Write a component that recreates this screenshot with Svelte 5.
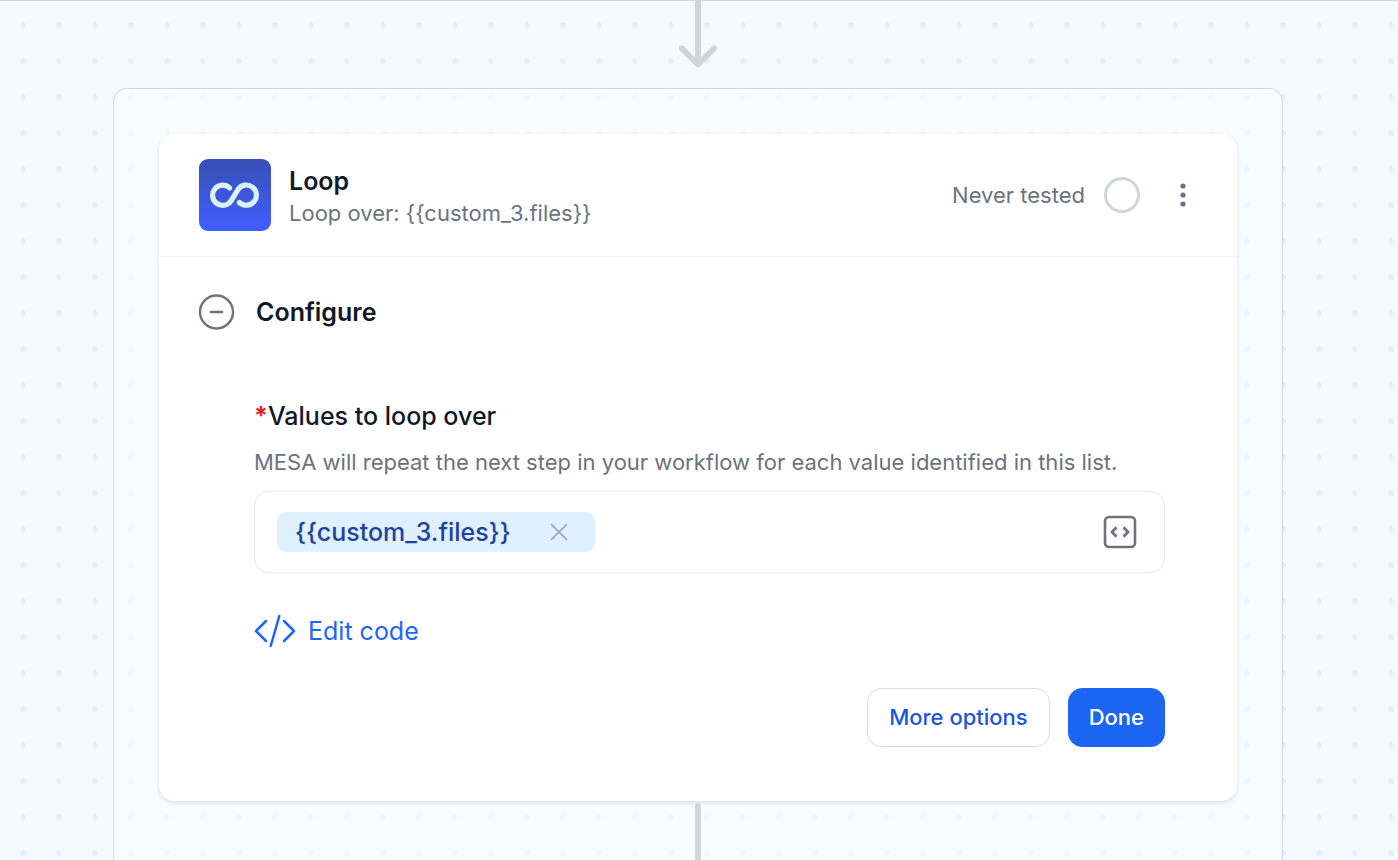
<script>
  let open = $state(true);
  let chips = $state(['{{custom_3.files}}']);
  let draft = $state('');
</script>

<main class="canvas">
  <svg class="arrow" width="40" height="68" viewBox="0 0 40 68" fill="none" aria-hidden="true">
    <path d="M20 -4V62M4 47.500L20 63.500L36 47.500" />
  </svg>

  <section class="group">
    <article class="card">
      <header class="head">
        <svg class="logo" width="72" height="72" viewBox="0 0 72 72" fill="none" aria-hidden="true">
          <defs>
            <linearGradient id="tile" x1="0" y1="0" x2="0" y2="1">
              <stop offset="0" stop-color="#374fb4" />
              <stop offset="1" stop-color="#405eff" />
            </linearGradient>
          </defs>
          <rect width="72" height="72" rx="9" fill="url(#tile)" />
          <path
            d="M30.600 28.900A10.100 10.100 0 1 0 31.800 42.300L39.200 30.100A10.100 10.100 0 1 1 40.400 43.500"
            stroke="#d8f3f3" stroke-width="5.200" stroke-linecap="round" stroke-linejoin="round"
          />
        </svg>
        <div class="titles">
          <h1>Loop</h1>
          <p>Loop over: &#123;&#123;custom_3.files&#125;&#125;</p>
        </div>
        <span class="status">Never tested</span>
        <span class="ring"></span>
        <button class="plain menu" type="button" aria-label="Step menu">
          <svg width="8" height="26" viewBox="0 0 8 26" fill="#6b7280">
            <circle cx="4" cy="4" r="2.600" /><circle cx="4" cy="13" r="2.600" /><circle cx="4" cy="22" r="2.600" />
          </svg>
        </button>
      </header>

      <div class="body">
        <button class="plain section" type="button" aria-expanded={open} onclick={() => (open = !open)}>
          <svg width="36" height="36" viewBox="0 0 36 36" fill="none" stroke="#6b7280" stroke-width="2.400" stroke-linecap="round">
            <circle cx="17.500" cy="18" r="16.500" />
            <path d={open ? 'M12 18H23' : 'M12 18H23M17.500 12.500V23.500'} />
          </svg>
          Configure
        </button>

        {#if open}
          <div class="form">
            <label for="values"><span class="star">*</span>Values to loop over</label>
            <p class="help" id="help">MESA will repeat the next step in your workflow for each value identified in this list.</p>
            <div class="field">
              {#each chips as chip, i}
                <span class="chip">
                  {chip}
                  <button class="plain" type="button" aria-label="Remove value" onclick={() => chips.splice(i, 1)}>
                    <svg width="18" height="18" viewBox="0 0 18 18" fill="none" stroke="#9ca3af" stroke-width="1.700" stroke-linecap="round">
                      <path d="M1.500 1.500L16.500 16.500M16.500 1.500L1.500 16.500" />
                    </svg>
                  </button>
                </span>
              {/each}
              <input id="values" type="text" aria-describedby="help" bind:value={draft} />
              <button class="plain" type="button" aria-label="Insert variable">
                <svg width="34" height="34" viewBox="0 0 34 34" fill="none" stroke="#6b7280" stroke-linecap="round" stroke-linejoin="round">
                  <rect x="2" y="2" width="30" height="30" rx="4" stroke-width="2.600" />
                  <path d="M13.500 12.200L9 17L13.500 21.800M20.500 12.200L25 17L20.500 21.800" stroke-width="2.800" stroke-linecap="butt" stroke-linejoin="miter" />
                </svg>
              </button>
            </div>

            <button class="plain edit" type="button">
              <svg width="42" height="34" viewBox="0 0 42 34" fill="none" stroke="#1d66f5" stroke-width="2.500" stroke-linecap="round" stroke-linejoin="round">
                <path d="M12 7L2 17L12 27M30 7L40 17L30 27M25.300 2L16.700 32" />
              </svg>
              Edit code
            </button>

            <div class="actions">
              <button class="btn outline" type="button">More options</button>
              <button class="btn primary" type="button">Done</button>
            </div>
          </div>
        {/if}
      </div>
    </article>

    <div class="line"></div>
  </section>
</main>

<style>
  :global(body) {
    margin: 0;
    background: #f4faff;
  }

  .canvas {
    box-sizing: border-box;
    height: 100vh;
    overflow: hidden;
    display: flex;
    flex-direction: column;
    align-items: center;
    padding-right: 2px;
    border-top: 1px solid #d5d9de;
    background: radial-gradient(circle at 18px 18px, #e0effe 2.500px, transparent 3.500px) 5px 6px / 36px 36px #f4faff;
    font-family: Inter, sans-serif;
    color: #111827;
  }

  .arrow {
    flex: none;
    margin-bottom: 19px;
    stroke: #d1d5db;
    stroke-width: 6px;
    stroke-linecap: round;
    stroke-linejoin: round;
  }

  .group {
    box-sizing: border-box;
    width: calc(100% - 48px);
    max-width: 1170px;
    flex: 1 0 auto;
    display: flex;
    flex-direction: column;
    padding: 45px 45px 0;
    border: 1px solid #d5d9de;
    border-bottom: 0;
    border-radius: 14px 14px 0 0;
    background: rgba(251, 253, 255, 0.6);
  }

  .card {
    border-radius: 16px;
    background: #fff;
    box-shadow: 0 2px 4px rgba(0, 0, 0, 0.12);
  }

  .head {
    display: flex;
    align-items: center;
    padding: 25px 40px;
    border-bottom: 1px solid #f3f4f6;
  }

  .logo {
    flex: none;
    margin-right: 18px;
  }

  .titles {
    flex: 1;
    padding-top: 4px;
  }

  h1,
  p {
    margin: 0;
  }

  h1 {
    font-size: 25px;
    line-height: 32px;
    font-weight: 600;
  }

  p,
  .status {
    font-size: 22px;
    line-height: 32px;
    color: #6b7280;
  }

  .ring {
    box-sizing: border-box;
    width: 36px;
    height: 36px;
    margin: 0 39px 0 19px;
    border: 3px solid #d1d5db;
    border-radius: 50%;
  }

  .plain {
    display: flex;
    align-items: center;
    flex: none;
    padding: 0;
    border: 0;
    background: none;
    font: inherit;
    color: inherit;
    cursor: pointer;
  }

  .menu {
    margin-right: 10px;
  }

  .body {
    padding: 37px 72px 54px 40px;
  }

  .section {
    gap: 21px;
    font-size: 25px;
    line-height: 36px;
    font-weight: 600;
  }

  .form {
    display: flex;
    flex-direction: column;
    padding: 70px 0 0 55px;
  }

  label {
    font-size: 25px;
    line-height: 32px;
    font-weight: 500;
  }

  .star {
    font-weight: 700;
    color: #e02424;
  }

  .help {
    margin: 14px 0 13px;
  }

  .field {
    display: flex;
    align-items: center;
    gap: 16px;
    padding: 20px 27px 20px 22px;
    border: 1px solid #e8eaed;
    border-radius: 14px;
  }

  .chip {
    display: flex;
    align-items: center;
    gap: 39px;
    padding: 0 27px 0 18px;
    border-radius: 9px;
    background: #dff0ff;
    font-size: 25px;
    line-height: 40px;
    font-weight: 500;
    color: #1e429f;
  }

  input {
    flex: 1;
    min-width: 0;
    height: 40px;
    padding: 0;
    border: 0;
    outline: 0;
    background: none;
    font: inherit;
    font-size: 25px;
    color: inherit;
  }

  .edit {
    align-self: flex-start;
    gap: 12px;
    margin: 41px 0 40px;
    font-size: 25px;
    line-height: 34px;
    color: #1d66f5;
  }

  .actions {
    display: flex;
    justify-content: flex-end;
    gap: 18px;
  }

  .btn {
    padding: 0 21px;
    border: 1px solid #d9dce1;
    border-radius: 14px;
    background: #fff;
    font: inherit;
    font-size: 22px;
    line-height: 57px;
    font-weight: 500;
    color: #1a56db;
    cursor: pointer;
  }

  .primary {
    padding: 0 20px;
    border-color: #1c64f2;
    background: #1c64f2;
    color: #fff;
  }

  .line {
    align-self: center;
    flex: 1 0 60px;
    width: 6px;
    margin-top: 2px;
    border-radius: 3px 3px 0 0;
    background: #d1d5db;
  }
</style>
